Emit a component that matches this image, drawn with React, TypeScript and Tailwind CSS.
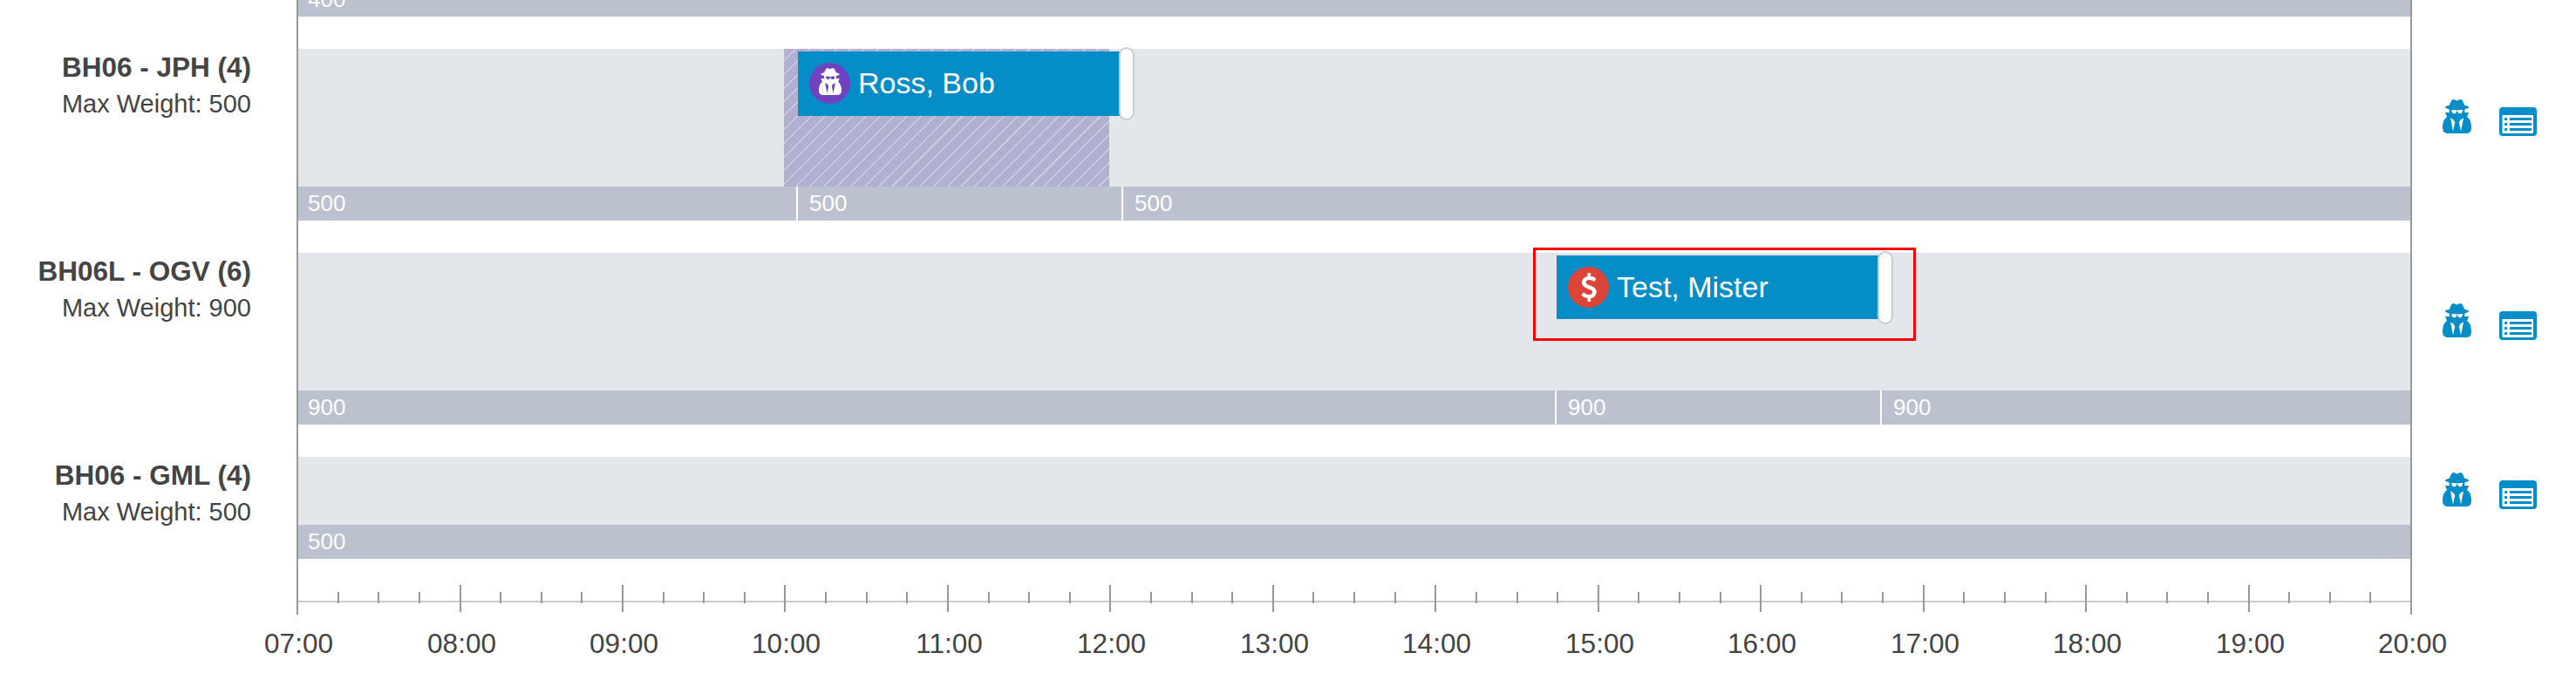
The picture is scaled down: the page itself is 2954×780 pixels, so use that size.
import type { ReactNode } from 'react'

type Booking = {
  name: string
  left: number
  kind: 'secret' | 'payment'
  className: string
}

type Resource = {
  title: string
  maxWeight: number
  laneClass: string
  actionsClass: string
  // px offsets, measured from the start of the lane
  splits: number[]
  booking?: Booking
  blocked?: boolean
  highlighted?: boolean
}

const RESOURCES: Resource[] = [
  {
    title: 'BH06 - JPH (4)',
    maxWeight: 500,
    laneClass: 'h-[158px]',
    actionsClass: 'pt-[58px]',
    splits: [571, 944],
    booking: { name: 'Ross, Bob', left: 573, kind: 'secret', className: 'top-[3px] h-[74px]' },
    blocked: true,
  },
  {
    title: 'BH06L - OGV (6)',
    maxWeight: 900,
    laneClass: 'h-[158px]',
    actionsClass: 'pt-[58px]',
    splits: [1441, 1814],
    booking: { name: 'Test, Mister', left: 1443, kind: 'payment', className: 'top-[3px] h-[73px]' },
    highlighted: true,
  },
  {
    title: 'BH06 - GML (4)',
    maxWeight: 500,
    laneClass: 'h-[78px]',
    actionsClass: 'pt-[18px]',
    splits: [],
  },
]

const FIRST_HOUR = 7
const HOURS = 13
const AXIS_WIDTH = 2424

const hourOffset = (h: number) => Math.round((h * AXIS_WIDTH) / HOURS + 0.04)

function SecretIcon({ className }: { className: string }) {
  return (
    <svg viewBox="64 -24 1408 1664" preserveAspectRatio="none" fill="currentColor" className={className}>
      <path d="M576 1536l96-448-96-128-128-64zm384 0l128-640-128 64-96 128zm104-1034q-2-4-4-6-10-8-96-8-70 0-167 19-7 2-21 2t-21-2q-97-19-167-19-86 0-96 8-2 2-4 6 2 18 4 27 2 3 7.5 6.5t7.5 10.5q2 4 7.5 20.5t7 20.5 7.5 17 8.5 17 9 14 12 13.5 14 9.5 17.5 8 20.5 4 24.5 2q36 0 59-12.5t32.5-30 14.5-34.5 11.5-29.5 17.5-12.5h12q11 0 17.5 12.5t11.5 29.5 14.5 34.5 32.5 30 59 12.5q13 0 24.5-2t20.5-4 17.5-8 14-9.5 12-13.5 9-14 8.5-17 7.5-17 7-20.5 7.5-20.5q2-7 7.5-10.5t7.5-6.5q2-9 4-27zm408 879q0 121-73 190t-194 69h-874q-121 0-194-69t-73-190q0-61 4.5-118t19-125.5 37.5-123.5 63.5-103.5 93.5-74.5l-90-220h214q-22-64-22-128 0-12 2-32-194-40-194-96 0-57 210-99 17-62 51.5-134t70.5-114q32-37 76-37 30 0 84 31t84 31 84-31 84-31q44 0 76 37 36 42 70.5 114t51.5 134q210 42 210 99 0 56-194 96 7 81-20 160h214l-82 225q63 33 107.5 96.5t65.5 143.5 29 151.5 8 148.5z" />
    </svg>
  )
}

function DollarIcon({ className }: { className: string }) {
  return (
    <svg viewBox="30 0 948 1792" fill="currentColor" className={className}>
      <path d="M978 1185q0 153-99.5 263.5t-258.5 136.5v175q0 14-9 23t-23 9h-135q-13 0-22.5-9.5t-9.5-22.5v-175q-66-9-127.5-31t-101.5-44.5-74-48-46.5-37.5-17.5-18q-17-21-2-41l103-135q7-10 23-12 15-2 24 9l2 2q113 99 243 125 37 8 74 8 81 0 142.5-43t61.5-122q0-28-15-53t-33.5-42-58.5-37.5-66-32-80-32.5q-39-16-61.5-25t-61.5-26.5-62.5-31-56.5-35.5-53.5-42.5-43.5-49-35.5-58-21-66.5-8.5-78q0-138 98-242t255-134v-180q0-13 9.5-22.5t22.5-9.5h135q14 0 23 9t9 23v176q57 6 110.5 23t87 33.5 63.5 37.5 39 29 15 14q17 18 5 38l-81 146q-8 15-23 16-14 3-27-7-3-3-14.5-12t-39-26.5-58.5-32-74.5-26-85.5-11.5q-95 0-155 43t-60 111q0 26 8.5 48t29.5 41.5 39.5 33 56 31 60.5 27 70 27.5q53 20 81 31.5t76 35 75.5 42.5 62 50 53 63.5 31.5 76.5 13 94z" />
    </svg>
  )
}

function ListIcon({ className }: { className: string }) {
  return (
    <svg viewBox="0 0 43 33" fill="currentColor" className={className}>
      <path fillRule="evenodd" d="M4 0h35a4 4 0 0 1 4 4v25a4 4 0 0 1-4 4H4a4 4 0 0 1-4-4V4a4 4 0 0 1 4-4zM3.500 9v20a1 1 0 0 0 1 1h33.500a1 1 0 0 0 1-1V9z" />
      {[12, 18, 24].map((y) => (
        <g key={y}>
          <rect x="6" y={y} width="3" height="3" rx=".6" />
          <rect x="12" y={y} width="25" height="3" rx=".6" />
        </g>
      ))}
    </svg>
  )
}

function WeightBar({ weight, splits }: { weight: number; splits: number[] }) {
  const starts = [0, ...splits]
  return (
    <div className="flex h-[39px] bg-[#bbc1ce] text-[26px] leading-[39px] text-white">
      {starts.map((start, i) => {
        const end = starts[i + 1] ?? 2422
        return (
          <div
            key={start}
            className={i === 0 ? 'shrink-0 pl-[11px]' : 'shrink-0 border-l-2 border-white pl-[13px]'}
            style={{ width: end - start }}
          >
            {weight}
          </div>
        )
      })}
    </div>
  )
}

function BookingBlock({ booking }: { booking: Booking }) {
  return (
    <div
      className={`absolute flex w-[370px] items-start bg-[#058dc8] pl-[13px] pt-[13px] text-white ${booking.className}`}
      style={{ left: booking.left }}
    >
      {booking.kind === 'secret' ? (
        <span className="flex h-[47px] w-[47px] justify-center rounded-full bg-[#6f42c1] pt-[6px]">
          <SecretIcon className="h-[31px] w-[26px]" />
        </span>
      ) : (
        <span className="flex h-[47px] w-[47px] items-center justify-center rounded-full bg-[#dc4437]">
          <DollarIcon className="h-[33px] w-[18px]" />
        </span>
      )}
      <span className="pl-[9px] text-[34px] leading-[46px]">{booking.name}</span>
      <span className="absolute -right-4 -top-[5px] h-[84px] w-[18px] rounded-full border-2 border-[#ccc] bg-white" />
    </div>
  )
}

function Track({ children }: { children: ReactNode }) {
  return <div className="w-[2426px] shrink-0 border-x-2 border-[#999] pb-[37px]">{children}</div>
}

function ResourceRow({ resource }: { resource: Resource }) {
  const { title, maxWeight, laneClass, actionsClass, splits, booking, blocked, highlighted } = resource
  return (
    <div className="flex">
      <div className="w-[340px] shrink-0 pr-[52px] text-right text-[#444]">
        <div className="text-[31.5px] font-bold leading-[42px]">{title}</div>
        <div className="text-[29px] leading-[42px]">Max Weight: {maxWeight}</div>
      </div>
      <Track>
        <div className={`relative bg-[#e3e6eb] ${laneClass}`}>
          {blocked && (
            <div className="absolute inset-y-0 left-[557px] w-[373px] bg-[#b1b0d1] bg-[repeating-linear-gradient(135deg,transparent_0px,transparent_8.8px,#cbcbe1_8.8px,#cbcbe1_10.3px,transparent_10.3px,transparent_11.17px)]" />
          )}
          {booking && <BookingBlock booking={booking} />}
          {highlighted && (
            <div className="absolute -top-[6px] left-[1416px] h-[107px] w-[439px] rounded-[1px] border-3 border-[#f00]" />
          )}
        </div>
        <WeightBar weight={maxWeight} splits={splits} />
      </Track>
      <div className={`flex items-start pl-[35px] text-[#058dc8] ${actionsClass}`}>
        <SecretIcon className="h-[39px] w-[33px]" />
        <ListIcon className="ml-8 mt-[9px] h-[33px] w-[43px]" />
      </div>
    </div>
  )
}

function TimeAxis() {
  const ticks = Array.from({ length: HOURS * 4 + 1 }, (_, i) => i)
  const hours = Array.from({ length: HOURS + 1 }, (_, i) => i)
  return (
    <div className="relative ml-[340px] h-[102px] w-[2426px]">
      <div className="mt-[11px] h-[2px] bg-[#ccc]" />
      {ticks.map((i) => {
        const edge = i === 0 || i === HOURS * 4
        const size = edge ? 'top-0 h-[27px]' : i % 4 === 0 ? '-top-[7px] h-[31px]' : 'top-[1px] h-[13px]'
        return (
          <span
            key={i}
            className={`absolute w-[2px] bg-[#999] ${size}`}
            style={{ left: hourOffset(i / 4) }}
          />
        )
      })}
      {hours.map((h) => (
        <span
          key={h}
          className="absolute top-[40px] w-[100px] text-center text-[31.5px] leading-[40px] text-[#444]"
          style={{ left: hourOffset(h) - 47.5 }}
        >
          {String(FIRST_HOUR + h).padStart(2, '0')}:00
        </span>
      ))}
    </div>
  )
}

export default function App() {
  return (
    <div className="flex h-[780px] w-[2954px] flex-col overflow-hidden bg-white font-['Liberation_Sans',Arial,sans-serif]">
      <div className="-mt-5 flex pl-[340px]">
        <Track>
          <WeightBar weight={400} splits={[]} />
        </Track>
      </div>
      {RESOURCES.map((resource) => (
        <ResourceRow key={resource.title} resource={resource} />
      ))}
      <TimeAxis />
    </div>
  )
}
